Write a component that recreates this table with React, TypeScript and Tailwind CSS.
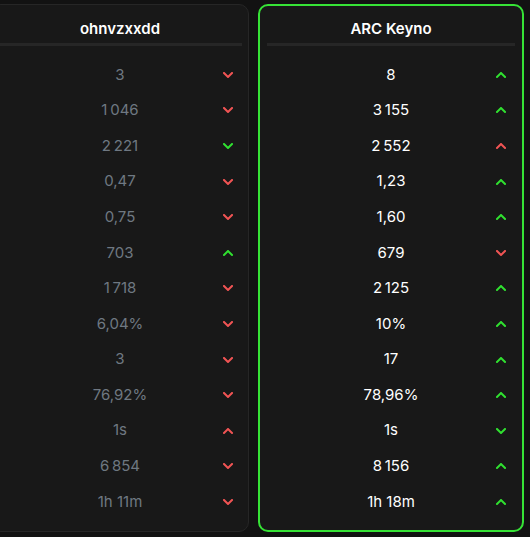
import React from "react";

type Row = { v: string; dir: "up" | "down"; good: boolean };

const NB = "\u202F";

const left: Row[] = [
  { v: "3", dir: "down", good: false },
  { v: `1${NB}046`, dir: "down", good: false },
  { v: `2${NB}221`, dir: "down", good: true },
  { v: "0,47", dir: "down", good: false },
  { v: "0,75", dir: "down", good: false },
  { v: "703", dir: "up", good: true },
  { v: `1${NB}718`, dir: "down", good: false },
  { v: "6,04%", dir: "down", good: false },
  { v: "3", dir: "down", good: false },
  { v: "76,92%", dir: "down", good: false },
  { v: "1s", dir: "up", good: false },
  { v: `6${NB}854`, dir: "down", good: false },
  { v: "1h 11m", dir: "down", good: false },
];

const right: Row[] = [
  { v: "8", dir: "up", good: true },
  { v: `3${NB}155`, dir: "up", good: true },
  { v: `2${NB}552`, dir: "up", good: false },
  { v: "1,23", dir: "up", good: true },
  { v: "1,60", dir: "up", good: true },
  { v: "679", dir: "down", good: false },
  { v: `2${NB}125`, dir: "up", good: true },
  { v: "10%", dir: "up", good: true },
  { v: "17", dir: "up", good: true },
  { v: "78,96%", dir: "up", good: true },
  { v: "1s", dir: "down", good: true },
  { v: `8${NB}156`, dir: "up", good: true },
  { v: "1h 18m", dir: "up", good: true },
];

function Chevron({ dir, good }: { dir: "up" | "down"; good: boolean }) {
  return (
    <svg
      width="10"
      height="6"
      viewBox="0 0 10 6"
      className={good ? "text-[#30e030]" : "text-[#f05454]"}
    >
      <polyline
        points={dir === "down" ? "1,1 5,5 9,1" : "1,5 5,1 9,5"}
        fill="none"
        stroke="currentColor"
        strokeWidth="2"
        strokeLinecap="square"
        strokeLinejoin="miter"
      />
    </svg>
  );
}

function Card({
  title,
  rows,
  highlight,
}: {
  title: string;
  rows: Row[];
  highlight: boolean;
}) {
  return (
    <div
      className={
        highlight
          ? "w-[266px] shrink-0 rounded-[10px] border-2 border-[#36e336] bg-[#181818] px-[7px] pt-[13px] pb-[10px]"
          : "w-[258px] shrink-0 rounded-[10px] border border-[#262626] bg-[#181818] px-[6px] pt-[14px] pb-[11px]"
      }
    >
      <div className="h-[20px] flex items-center justify-center text-[15px] font-semibold text-white leading-[20px]">
        {title}
      </div>
      <div className="mt-[4px] h-[3px] bg-[#262626]" />
      <div className="mt-[11px] flex flex-col">
        {rows.map((r, i) => (
          <div key={i} className="relative h-[35.6px] flex items-center justify-center">
            <span
              className={
                highlight
                  ? "text-[15px] text-white"
                  : "text-[15px] text-[#6f7882]"
              }
            >
              {r.v}
            </span>
            <div className="absolute right-[9px] top-1/2 -translate-y-1/2 flex">
              <Chevron dir={r.dir} good={r.good} />
            </div>
          </div>
        ))}
      </div>
    </div>
  );
}

export default function App() {
  return (
    <div
      className="w-[530px] h-[537px] overflow-hidden bg-[#121212]"
      style={{ fontFamily: "Inter, 'Noto Sans', sans-serif" }}
    >
      <div className="flex gap-[9px] -ml-[9px] pt-[4px]">
        <Card title="ohnvzxxdd" rows={left} highlight={false} />
        <Card title="ARC Keyno" rows={right} highlight={true} />
      </div>
    </div>
  );
}
